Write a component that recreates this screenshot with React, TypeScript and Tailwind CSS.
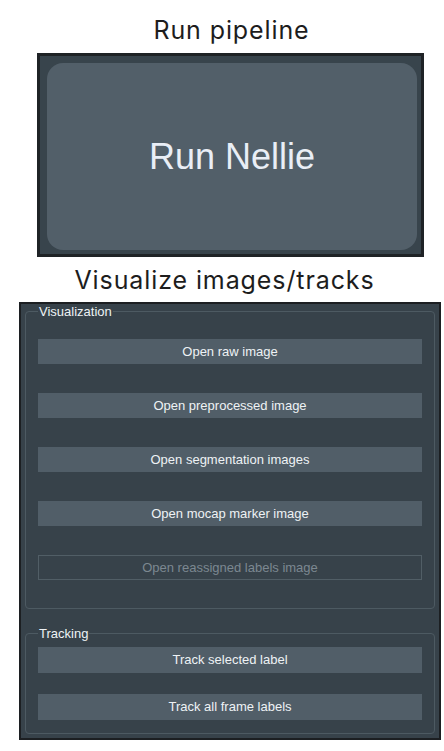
const sans = "font-['Liberation_Sans',Arial,sans-serif]";

function PanelButton({ label, disabled, tall }: { label: string; disabled?: boolean; tall?: boolean }) {
    return (
        <button
            disabled={disabled}
            className={
                disabled
                    ? `${sans} w-full h-[25px] border border-[#515e66] bg-transparent text-[13px] text-[#7c8891]`
                    : tall
                      ? `${sans} w-full h-[26px] bg-[#515e68] text-[13px] text-[#eef2f5]`
                      : `${sans} w-full h-[25px] bg-[#515e68] text-[13px] text-[#eef2f5]`
            }
        >
            {label}
        </button>
    );
}

export default function App() {
    return (
        <div className="w-[444px] h-[751px] bg-white overflow-hidden">
            <h1 className="pt-[15px] pl-[19px] text-center font-['Inter',sans-serif] text-[25px] tracking-[0.9px] leading-[31px] text-[#1d1d1d]">
                Run pipeline
            </h1>

            <div className="mt-[7px] ml-[37px] w-[387px] h-[204px] border-[3px] border-[#1f2326] bg-[#38444c] pt-[7px] pl-[7px] pr-[4px] pb-[4px] flex">
                <button className={`${sans} flex-1 rounded-[16px] bg-[#525f69] text-[36px] text-[#e9eef6]`}>
                    Run Nellie
                </button>
            </div>

            <h2 className="mt-[8px] pl-[5px] text-center font-['Inter',sans-serif] text-[25px] tracking-[0.9px] leading-[31px] text-[#1d1d1d]">
                Visualize images/tracks
            </h2>

            <div className="mt-[6px] ml-[19px] w-[422px] h-[438px] border-2 border-[#1c1f22] bg-[#37424a] px-[4px] flex flex-col">
                <fieldset className="border border-[#4d5a62] rounded-[4px] px-[12px] pb-[28px] pt-[20px] flex flex-col gap-[29px]">
                    <legend className={`${sans} px-[1px] text-[13px] leading-[15px] text-[#eef2f5]`}>Visualization</legend>
                    <PanelButton label="Open raw image" />
                    <PanelButton label="Open preprocessed image" />
                    <PanelButton label="Open segmentation images" />
                    <PanelButton label="Open mocap marker image" />
                    <PanelButton label="Open reassigned labels image" disabled />
                </fieldset>

                <fieldset className="mt-[17px] border border-[#4d5a62] rounded-[4px] px-[12px] pb-[13px] pt-[6px] flex flex-col gap-[21px]">
                    <legend className={`${sans} px-[1px] text-[13px] leading-[15px] text-[#eef2f5]`}>Tracking</legend>
                    <PanelButton label="Track selected label" tall />
                    <PanelButton label="Track all frame labels" tall />
                </fieldset>
            </div>
        </div>
    );
}
